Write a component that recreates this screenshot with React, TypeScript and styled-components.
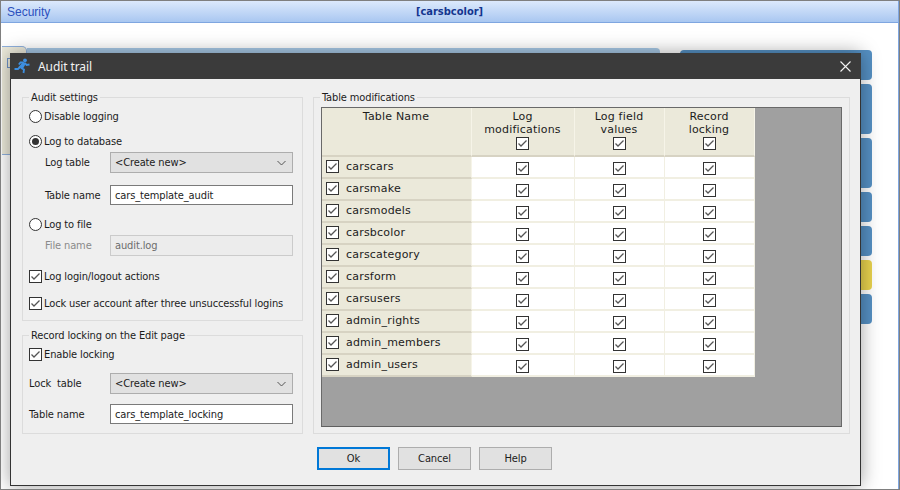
import React from "react";
import styled, { createGlobalStyle } from "styled-components";

const Global = createGlobalStyle`
  html, body { margin: 0; padding: 0; background: #fff; }
  * { box-sizing: border-box; }
  body { font-family: "DejaVu Sans Condensed", "Noto Sans", sans-serif; font-size: 11px; letter-spacing: -0.12px; color: #1c1c1c; }
`;

const Page = styled.div`
  position: relative;
  width: 900px;
  height: 490px;
  overflow: hidden;
  background: #fff;
  border: 1px solid #7f7f7f;
`;
const Canvas = styled.div`
  height: 100%;
  border-right: 1px solid #7fa6e0;
`;
const TopBar = styled.div`
  display: grid;
  grid-template-columns: 1fr auto 1fr;
  align-items: center;
  height: 22px;
  padding: 0 6px;
  background: linear-gradient(#dce9fc, #a9c7f1);
  border-bottom: 1px solid #7fa6e0;
`;
const Section = styled.span`
  font: 12px "Liberation Sans", sans-serif;
  letter-spacing: 0;
  color: #2b4fbd;
`;
const Heading = styled.span`
  font: bold 11px "DejaVu Sans Condensed", "DejaVu Sans", sans-serif;
  letter-spacing: 0;
  color: #14358f;
`;
const Workspace = styled.div`
  display: flex;
  align-items: flex-start;
  padding: 23px 0 0 1px;
`;
const SideTab = styled.div`
  width: 25px;
  height: 109px;
  padding: 11px 0 0 5px;
  background: #eceadb;
  border-radius: 0 5px 0 0;
  border: 1px solid #8fb0dd;
  border-left: 0;
`;
const SideMark = styled.div`
  width: 8px;
  height: 10px;
  border: 1px solid #6f94c8;
`;
const MainStrip = styled.div`
  width: 633px;
  height: 20px;
  margin-top: 2px;
  background: #a8c9e6;
  border-radius: 0 4px 0 0;
`;
const ActionColumn = styled.div`
  display: flex;
  flex-direction: column;
  gap: 4px;
  width: 192px;
  margin: 4px 0 0 20px;
`;
const ActionTile = styled.div<{ $h: number; $yellow?: boolean }>`
  height: ${(p) => p.$h}px;
  background: ${(p) => (p.$yellow ? "#e8d24e" : "#5590c3")};
  border-radius: 4px;
`;

const Dialog = styled.div`
  position: absolute;
  left: 9px;
  top: 52px;
  width: 851px;
  height: 433px;
  display: flex;
  flex-direction: column;
  background: #efefef;
  border: 1px solid #333;
  border-top: 0;
  box-shadow: 0 0 18px rgba(0, 0, 0, 0.38);
`;
const DialogHead = styled.div`
  display: flex;
  align-items: center;
  justify-content: space-between;
  flex: none;
  height: 26px;
  margin: 0 -1px;
  padding: 0 10px 0 4px;
  background: #3b3b3b;
`;
const DialogTitle = styled.div`
  display: flex;
  align-items: center;
  gap: 8px;
  font: 12px "Noto Sans", sans-serif;
  letter-spacing: -0.1px;
  color: #f2f2f2;
`;
const DialogBody = styled.div`
  display: grid;
  grid-template-columns: 281px 537px;
  column-gap: 10px;
  padding: 11px 0 0 11px;
`;
const LeftColumn = styled.div`
  display: flex;
  flex-direction: column;
  gap: 7px;
`;
const Group = styled.fieldset<{ $h: number }>`
  height: ${(p) => p.$h}px;
  margin: 0;
  padding: 0 0 0 6px;
  min-width: 0;
  border: 1px solid #dcdcdc;
`;
const Legend = styled.legend`
  height: 14px;
  margin-left: 0;
  padding: 0 2px;
  line-height: 16px;
  color: #1c1c1c;
`;
const OptionRow = styled.label<{ $mt: number }>`
  display: flex;
  align-items: center;
  gap: 2px;
  height: 14px;
  margin-top: ${(p) => p.$mt}px;
  white-space: nowrap;
`;
const OptionText = styled.span`
  padding-top: 2px;
  line-height: 14px;
`;
const Radio = styled.span<{ $on?: boolean }>`
  flex: none;
  display: flex;
  align-items: center;
  justify-content: center;
  width: 13px;
  height: 13px;
  border: 1px solid #333;
  border-radius: 50%;
  background: #fff;
  &::after {
    content: "";
    width: 7px;
    height: 7px;
    border-radius: 50%;
    background: ${(p) => (p.$on ? "#333" : "transparent")};
  }
`;
const FieldRow = styled.div<{ $mt: number; $indent: number; $h: number }>`
  display: grid;
  grid-template-columns: 1fr 183px;
  align-items: center;
  height: ${(p) => p.$h}px;
  margin-top: ${(p) => p.$mt}px;
  padding-left: ${(p) => p.$indent}px;
  width: 264px;
`;
const FieldLabel = styled.span<{ $muted?: boolean }>`
  color: ${(p) => (p.$muted ? "#8a8a8a" : "#1c1c1c")};
  white-space: pre;
`;
const TextBox = styled.div<{ $disabled?: boolean }>`
  display: flex;
  align-items: center;
  height: 100%;
  padding-left: 4px;
  background: ${(p) => (p.$disabled ? "#ececec" : "#fff")};
  border: 1px solid ${(p) => (p.$disabled ? "#cbcbcb" : "#7a7a7a")};
  color: ${(p) => (p.$disabled ? "#6d6d6d" : "#1c1c1c")};
`;
const SelectBox = styled.div`
  display: flex;
  align-items: center;
  justify-content: space-between;
  height: 100%;
  padding: 0 6px 0 4px;
  background: #e1e1e1;
  border: 1px solid #adadad;
`;
const Grid = styled.div`
  width: 521px;
  height: 320px;
  margin: 3px 0 0 1px;
  background: #a0a0a0;
  border: 1px solid #696969;
  border-bottom-color: #5f5f5f;
`;
const Table = styled.div`
  display: grid;
  grid-template-columns: 150px 103px 90px 90px;
  grid-template-rows: 49px repeat(10, 22px);
  width: 433px;
  font: 11px "DejaVu Sans", sans-serif;
  letter-spacing: 0.2px;
`;
const HeadCell = styled.div`
  display: flex;
  flex-direction: column;
  align-items: center;
  padding: 2px 1px 0 0;
  line-height: 13px;
  text-align: center;
  background: #ebe9da;
  border-right: 1px solid #f6f4e8;
  border-bottom: 2px solid #d7d3c3;
`;
const HeadCheck = styled.span`
  display: flex;
  margin-top: 1px;
`;
const NameCell = styled.div`
  display: flex;
  align-items: flex-start;
  gap: 7px;
  padding: 3px 0 0 4px;
  line-height: 13px;
  background: #ebe9da;
  border-bottom: 2px solid #d7d3c3;
  border-right: 1px solid #f6f4e8;
`;
const CheckCell = styled.div`
  display: flex;
  justify-content: center;
  padding: 5px 1px 0 0;
  background: #fff;
  border-right: 1px solid #f1efe2;
  border-bottom: 2px solid #f1efe2;
`;
const Footer = styled.div`
  display: flex;
  justify-content: center;
  gap: 8px;
  margin-top: 13px;
  padding-right: 2px;
`;
const Button = styled.div<{ $primary?: boolean }>`
  display: flex;
  align-items: center;
  justify-content: center;
  width: 73px;
  height: 23px;
  background: #e1e1e1;
  border: ${(p) => (p.$primary ? "2px solid #0078d7" : "1px solid #adadad")};
`;

const Check = () => (
  <svg width="13" height="13" viewBox="0 0 13 13" style={{ flex: "none" }}>
    <rect x="0.5" y="0.5" width="12" height="12" fill="#fff" stroke="#333" />
    <path d="M2.5 6.5 L5 9 L10.5 3.5" fill="none" stroke="#555" strokeWidth="1.3" />
  </svg>
);

const Chevron = () => (
  <svg width="9" height="6" viewBox="0 0 9 6">
    <path d="M0.5 1 L4.5 5 L8.5 1" fill="none" stroke="#555" strokeWidth="1" />
  </svg>
);

const Runner = () => (
  <svg width="16" height="16" viewBox="0 0 16 16">
    <circle cx="11" cy="2.3" r="1.9" fill="#3d8fe0" />
    <path d="M9 4 L12.2 5 L8.5 11.5 L4.5 9 Z" fill="#3d8fe0" />
    <path
      d="M11 5 L12.5 7 L15.5 6.5 M9.5 4.5 L6.5 4.5 L4.8 6.5 M6 9 L4 11 L0.5 11 M7 10 L10 11.5 L9.5 15"
      fill="none"
      stroke="#3d8fe0"
      strokeWidth="1.8"
    />
  </svg>
);

const Close = () => (
  <svg width="11" height="11" viewBox="0 0 11 11">
    <path d="M0.5 0.5 L10.5 10.5 M10.5 0.5 L0.5 10.5" stroke="#f4f4f4" strokeWidth="1.1" />
  </svg>
);

const tables = [
  "carscars",
  "carsmake",
  "carsmodels",
  "carsbcolor",
  "carscategory",
  "carsform",
  "carsusers",
  "admin_rights",
  "admin_members",
  "admin_users",
];

const tiles: { h: number; yellow?: boolean }[] = [
  { h: 30 },
  { h: 50 },
  { h: 50 },
  { h: 30 },
  { h: 30 },
  { h: 30, yellow: true },
  { h: 30 },
];

const headers = [
  ["Log", "modifications"],
  ["Log field", "values"],
  ["Record", "locking"],
];

export default function App() {
  return (
    <>
      <Global />
      <Page>
        <Canvas>
          <TopBar>
            <Section>Security</Section>
            <Heading>[carsbcolor]</Heading>
          </TopBar>
          <Workspace>
            <SideTab>
              <SideMark />
            </SideTab>
            <MainStrip />
            <ActionColumn>
              {tiles.map((t, i) => (
                <ActionTile key={i} $h={t.h} $yellow={t.yellow} />
              ))}
            </ActionColumn>
          </Workspace>
        </Canvas>
        <Dialog>
          <DialogHead>
            <DialogTitle>
              <Runner />
              Audit trail
            </DialogTitle>
            <Close />
          </DialogHead>
          <DialogBody>
            <LeftColumn>
              <Group $h={231}>
                <Legend>Audit settings</Legend>
                <OptionRow $mt={5}>
                  <Radio />
                  <OptionText>Disable logging</OptionText>
                </OptionRow>
                <OptionRow $mt={11}>
                  <Radio $on />
                  <OptionText>Log to database</OptionText>
                </OptionRow>
                <FieldRow $mt={4} $h={21} $indent={16}>
                  <FieldLabel>Log table</FieldLabel>
                  <SelectBox>
                    &lt;Create new&gt;
                    <Chevron />
                  </SelectBox>
                </FieldRow>
                <FieldRow $mt={12} $h={20} $indent={16}>
                  <FieldLabel>Table name</FieldLabel>
                  <TextBox>cars_template_audit</TextBox>
                </FieldRow>
                <OptionRow $mt={12}>
                  <Radio />
                  <OptionText>Log to file</OptionText>
                </OptionRow>
                <FieldRow $mt={4} $h={21} $indent={16}>
                  <FieldLabel $muted>File name</FieldLabel>
                  <TextBox $disabled>audit.log</TextBox>
                </FieldRow>
                <OptionRow $mt={13}>
                  <Check />
                  <OptionText>Log login/logout actions</OptionText>
                </OptionRow>
                <OptionRow $mt={13}>
                  <Check />
                  <OptionText>Lock user account after three unsuccessful logins</OptionText>
                </OptionRow>
              </Group>
              <Group $h={106}>
                <Legend>Record locking on the Edit page</Legend>
                <OptionRow $mt={5}>
                  <Check />
                  <OptionText>Enable locking</OptionText>
                </OptionRow>
                <FieldRow $mt={12} $h={21} $indent={0}>
                  <FieldLabel>{"Lock  table"}</FieldLabel>
                  <SelectBox>
                    &lt;Create new&gt;
                    <Chevron />
                  </SelectBox>
                </FieldRow>
                <FieldRow $mt={10} $h={20} $indent={0}>
                  <FieldLabel>Table name</FieldLabel>
                  <TextBox>cars_template_locking</TextBox>
                </FieldRow>
              </Group>
            </LeftColumn>
            <Group $h={344}>
              <Legend>Table modifications</Legend>
              <Grid>
                <Table>
                  <HeadCell>Table Name</HeadCell>
                  {headers.map(([a, b]) => (
                    <HeadCell key={a}>
                      <span>{a}</span>
                      <span>{b}</span>
                      <HeadCheck>
                        <Check />
                      </HeadCheck>
                    </HeadCell>
                  ))}
                  {tables.map((t) => (
                    <React.Fragment key={t}>
                      <NameCell>
                        <Check />
                        {t}
                      </NameCell>
                      <CheckCell>
                        <Check />
                      </CheckCell>
                      <CheckCell>
                        <Check />
                      </CheckCell>
                      <CheckCell>
                        <Check />
                      </CheckCell>
                    </React.Fragment>
                  ))}
                </Table>
              </Grid>
            </Group>
          </DialogBody>
          <Footer>
            <Button $primary>Ok</Button>
            <Button>Cancel</Button>
            <Button>Help</Button>
          </Footer>
        </Dialog>
      </Page>
    </>
  );
}
